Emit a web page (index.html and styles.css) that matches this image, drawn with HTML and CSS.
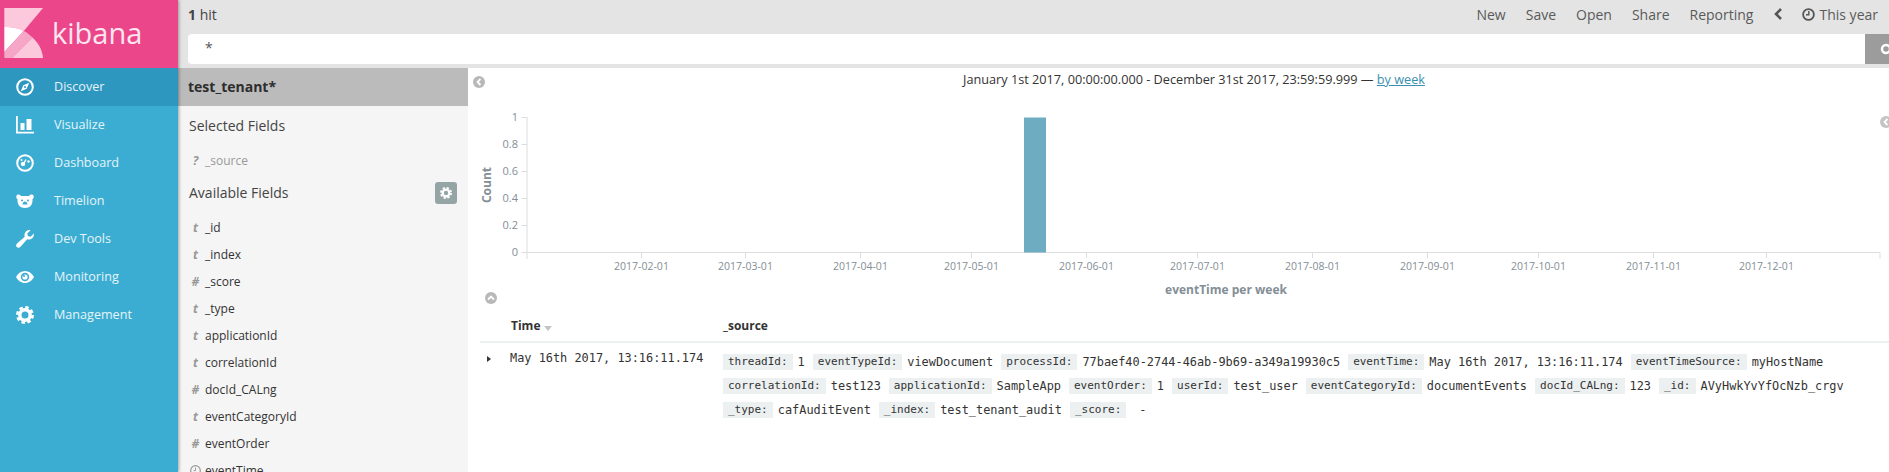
FILE: index.html
```html
<!DOCTYPE html>
<html>
<head>
	<meta charset="UTF-8">
	<title>Discover - Kibana</title>
	<link rel="stylesheet" href="styles.css">
</head>
<body>
	<nav class="sidebar">
		<div class="brand">
			<svg class="logo" width="48" height="68" viewBox="0 0 48 68">
				<path fill="#fbc8dc" d="M4.3 8H43L23.8 31C18 28 11 26.6 4.3 27z"/>
				<path fill="#fff" d="M4.3 27C11 26.6 18 28 23.8 31L4.3 52z"/>
				<path fill="#f6a6c6" d="M4.3 52L23.8 31C27 32.600 30 35 32.500 37.500L12 58H4.300z"/>
				<path fill="#fbc8dc" d="M12 58L32.500 37.500C38.500 43 42.300 50 43 58z"/>
			</svg>
			<span class="brand-name">kibana</span>
		</div>
		<a class="nav-item active">
			<svg class="nav-icon" viewBox="0 0 18 18"><circle cx="9" cy="9" r="7.800" fill="none" stroke="#fff" stroke-width="2"/><path fill="#fff" d="M13.200 4.800L10.700 10.700 4.800 13.200 7.300 7.300zM9 8a1 1 0 1 0 0 2 1 1 0 0 0 0-2z" fill-rule="evenodd"/></svg>
			<span>Discover</span>
		</a>
		<a class="nav-item">
			<svg class="nav-icon" viewBox="0 0 18 18"><path fill="#fff" d="M0 0h1.800v15.700H18V17.500H0zM4.500 7h4v7h-4zM10.500 3h5v11h-5z"/></svg>
			<span>Visualize</span>
		</a>
		<a class="nav-item">
			<svg class="nav-icon" viewBox="0 0 18 18"><circle cx="9" cy="9" r="7.800" fill="none" stroke="#fff" stroke-width="2"/><circle cx="7" cy="10" r="2.200" fill="#fff"/><path stroke="#fff" stroke-width="1.500" d="M8 9l2-3.500"/><circle cx="12.500" cy="7.500" r="1.200" fill="#fff"/><circle cx="5.500" cy="6" r="1" fill="#fff"/></svg>
			<span>Dashboard</span>
		</a>
		<a class="nav-item">
			<svg class="nav-icon" viewBox="0 0 18 18"><path fill="#fff" fill-rule="evenodd" d="M1 3C3 1.800 4.500 3 5 4H13C13.500 3 15 1.800 17 3 18.500 4.500 17.500 6.500 16.500 7 16.800 11 15.500 16 9 16 2.500 16 1.200 11 1.500 7 .5 6.500-.5 4.500 1 3zM6 7.500a1 1 0 1 0 0 2 1 1 0 0 0 0-2zM12 7.500a1 1 0 1 0 0 2 1 1 0 0 0 0-2zM9 9.500c-1.500 0-2.500 1.500-2.500 3H11.500C11.500 11 10.500 9.500 9 9.500z"/></svg>
			<span>Timelion</span>
		</a>
		<a class="nav-item">
			<svg class="nav-icon" viewBox="0 0 18 18"><path fill="#fff" d="M17.800 3.500C18.300 6 17 8.500 14.500 9.300 13.300 9.700 12.200 9.600 11.200 9.200L4.500 16.800C3.500 18 1.800 18.100.8 17.100-.2 16.100-.1 14.500 1 13.500L8.800 6.800C8.400 5.800 8.300 4.700 8.700 3.500 9.500 1 12 -.3 14.500.2L11.300 3.400 11.900 6.100 14.600 6.700z"/></svg>
			<span>Dev Tools</span>
		</a>
		<a class="nav-item">
			<svg class="nav-icon" viewBox="0 0 18 18"><path fill="#fff" fill-rule="evenodd" d="M0 9C2 5.300 5.300 3 9 3s7 2.300 9 6c-2 3.700-5.300 6-9 6S2 12.700 0 9zM9 4.800a4.200 4.200 0 1 0 0 8.400 4.200 4.200 0 0 0 0-8.400z"/><circle cx="9" cy="9" r="2.600" fill="#fff"/><circle cx="8" cy="8" r="1" fill="#3cadd2"/></svg>
			<span>Monitoring</span>
		</a>
		<a class="nav-item">
			<svg class="nav-icon" viewBox="0 0 18 18"><circle cx="9" cy="9" r="5.200" fill="none" stroke="#fff" stroke-width="3.400"/><circle cx="9" cy="9" r="7.700" fill="none" stroke="#fff" stroke-width="2.600" stroke-dasharray="3.500 2.550"/></svg>
			<span>Management</span>
		</a>
	</nav>

	<div class="page">
		<header class="topbar">
			<div class="topbar-row">
				<div class="hits"><b>1</b> hit</div>
				<div class="actions">
					<a>New</a>
					<a>Save</a>
					<a>Open</a>
					<a>Share</a>
					<a>Reporting</a>
					<svg class="chevron" width="8" height="12" viewBox="0 0 8 12"><path fill="none" stroke="#555" stroke-width="2.600" d="M7 1L2 6l5 5"/></svg>
					<span class="timepicker">
						<svg width="13" height="13" viewBox="0 0 13 13"><circle cx="6.500" cy="6.500" r="5.400" fill="none" stroke="#555" stroke-width="1.800"/><path fill="none" stroke="#555" stroke-width="1.400" d="M6.800 3v3.800H4"/></svg>
						This year
					</span>
				</div>
			</div>
			<div class="searchbar">
				<div class="query">*</div>
				<div class="search-btn"><svg width="24" height="30" viewBox="0 0 24 30"><circle cx="21" cy="15" r="4" fill="none" stroke="#fff" stroke-width="2.500"/></svg></div>
			</div>
		</header>

		<div class="content">
			<aside class="fields">
				<div class="index-name">test_tenant*</div>
				<div class="field-heading heading-selected">Selected Fields</div>
				<div class="field muted"><i class="type">?</i>_source</div>
				<div class="field-heading heading-available">
					Available Fields
					<span class="gear-btn"><svg width="12" height="12" viewBox="0 0 18 18"><circle cx="9" cy="9" r="5" fill="none" stroke="#fff" stroke-width="3.400"/><circle cx="9" cy="9" r="7.700" fill="none" stroke="#fff" stroke-width="2.600" stroke-dasharray="3.500 2.550"/></svg></span>
				</div>
				<div class="field field-first"><i class="type">t</i>_id</div>
				<div class="field"><i class="type">t</i>_index</div>
				<div class="field"><i class="type">#</i>_score</div>
				<div class="field"><i class="type">t</i>_type</div>
				<div class="field"><i class="type">t</i>applicationId</div>
				<div class="field"><i class="type">t</i>correlationId</div>
				<div class="field"><i class="type">#</i>docId_CALng</div>
				<div class="field"><i class="type">t</i>eventCategoryId</div>
				<div class="field"><i class="type">#</i>eventOrder</div>
				<div class="field"><i class="type type-clock"><svg width="11" height="11" viewBox="0 0 11 11"><circle cx="5.500" cy="5.500" r="4.800" fill="none" stroke="#999" stroke-width="1.200"/><path fill="none" stroke="#999" d="M5.500 2.500v3.200h-2"/></svg></i>eventTime</div>
			</aside>

			<main class="results">
				<span class="collapse collapse-fields"><svg width="12" height="12" viewBox="0 0 12 12"><path fill="none" stroke="#fff" stroke-width="1.800" d="M7.500 3L4.500 6l3 3"/></svg></span>
				<span class="collapse collapse-right"><svg width="12" height="12" viewBox="0 0 12 12"><path fill="none" stroke="#fff" stroke-width="1.800" d="M7.500 3L4.500 6l3 3"/></svg></span>
				<span class="collapse collapse-chart"><svg width="12" height="12" viewBox="0 0 12 12"><path fill="none" stroke="#fff" stroke-width="1.800" d="M3 7.500L6 4.500l3 3"/></svg></span>

				<div class="range">January 1st 2017, 00:00:00.000 - December 31st 2017, 23:59:59.999 — <a>by week</a></div>

				<!-- coordinates are page pixels, the viewBox starts where the chart starts -->
				<svg class="chart" width="1421" height="218" viewBox="468 92 1421 218">
					<g class="axis-line">
						<path d="M527 117V259M527 252.500H1880M1880 252.500V259"/>
						<path d="M521.500 117.500H527M521.500 144.500H527M521.500 171.500H527M521.500 198.500H527M521.500 225.500H527M521.500 252.500H527"/>
						<path d="M641.500 252V258M745.500 252V258M860.500 252V258M971.500 252V258M1086.500 252V258M1197.500 252V258M1312.500 252V258M1427.500 252V258M1538.500 252V258M1653.500 252V258M1766.500 252V258"/>
					</g>
					<rect class="bar" x="1024" y="117.500" width="22" height="135"/>
					<g class="tick-y">
						<text x="518" y="121">1</text>
						<text x="518" y="148">0.8</text>
						<text x="518" y="175">0.6</text>
						<text x="518" y="202">0.4</text>
						<text x="518" y="229">0.2</text>
						<text x="518" y="256">0</text>
					</g>
					<g class="tick-x">
						<text x="641.500" y="270">2017-02-01</text>
						<text x="745.500" y="270">2017-03-01</text>
						<text x="860.500" y="270">2017-04-01</text>
						<text x="971.500" y="270">2017-05-01</text>
						<text x="1086.500" y="270">2017-06-01</text>
						<text x="1197.500" y="270">2017-07-01</text>
						<text x="1312.500" y="270">2017-08-01</text>
						<text x="1427.500" y="270">2017-09-01</text>
						<text x="1538.500" y="270">2017-10-01</text>
						<text x="1653.500" y="270">2017-11-01</text>
						<text x="1766.500" y="270">2017-12-01</text>
					</g>
					<text class="axis-title" transform="translate(491 185) rotate(-90)">Count</text>
					<text class="axis-title" x="1226" y="294">eventTime per week</text>
				</svg>

				<div class="doc-head">
					<div class="col-time">Time <span class="sort"></span></div>
					<div>_source</div>
				</div>
				<div class="doc-row">
					<div class="col-caret"><span class="caret"></span></div>
					<div class="doc-time">May 16th 2017, 13:16:11.174</div>
					<div class="source">
						<div class="pair"><span class="tag">threadId:</span><span>1</span></div>
						<div class="pair"><span class="tag">eventTypeId:</span><span>viewDocument</span></div>
						<div class="pair"><span class="tag">processId:</span><span>77baef40-2744-46ab-9b69-a349a19930c5</span></div>
						<div class="pair"><span class="tag">eventTime:</span><span>May 16th 2017, 13:16:11.174</span></div>
						<div class="pair"><span class="tag">eventTimeSource:</span><span>myHostName</span></div>
						<div class="pair"><span class="tag">correlationId:</span><span>test123</span></div>
						<div class="pair"><span class="tag">applicationId:</span><span>SampleApp</span></div>
						<div class="pair"><span class="tag">eventOrder:</span><span>1</span></div>
						<div class="pair"><span class="tag">userId:</span><span>test_user</span></div>
						<div class="pair"><span class="tag">eventCategoryId:</span><span>documentEvents</span></div>
						<div class="pair"><span class="tag">docId_CALng:</span><span>123</span></div>
						<div class="pair"><span class="tag">_id:</span><span>AVyHwkYvYfOcNzb_crgv</span></div>
						<div class="pair"><span class="tag">_type:</span><span>cafAuditEvent</span></div>
						<div class="pair"><span class="tag">_index:</span><span>test_tenant_audit</span></div>
						<div class="pair"><span class="tag">_score:</span><span class="dash">-</span></div>
					</div>
				</div>
			</main>
		</div>
	</div>
</body>
</html>
```

FILE: styles.css
```css
body {
	margin: 0;
	height: 472px;
	overflow: hidden;
	display: flex;
	background-color: #fff;
	color: #444;
	font-family: "Open Sans", sans-serif;
	font-size: 14px;
}

/* sidebar */
.sidebar {
	flex: 0 0 178px;
	background-color: #3cadd2;
	box-shadow: 1px 0 3px rgba(0, 0, 0, 0.35);
	position: relative;
	z-index: 2;
}

.brand {
	height: 68px;
	display: flex;
	align-items: center;
	background-color: #ec468b;
}

.logo {
	flex: 0 0 48px;
}

.brand-name {
	margin-left: 4px;
	padding-bottom: 2px;
	color: #fde6f0;
	font-size: 29px;
	line-height: 34px;
}

.nav-item {
	height: 38px;
	display: flex;
	align-items: center;
	padding-left: 16px;
	color: #e4f4f9;
	font-size: 12.6px;
}

.nav-item span {
	padding-bottom: 2px;
}

.nav-item.active {
	background-color: #2e97c0;
}

.nav-icon {
	width: 18px;
	height: 18px;
	margin-right: 20px;
}

/* top bar */
.page {
	flex: 1;
	min-width: 0;
	display: flex;
	flex-direction: column;
}

.topbar {
	height: 68px;
	background-color: #e4e4e4;
}

.topbar-row {
	height: 34px;
	padding-bottom: 6px;
	box-sizing: border-box;
	display: flex;
	align-items: center;
	justify-content: space-between;
	padding-left: 10px;
	padding-right: 11px;
}

.actions {
	display: flex;
	align-items: center;
	gap: 20px;
	color: #5a5a5a;
}

.chevron {
	margin-left: 1px;
}

.timepicker {
	display: flex;
	align-items: center;
	gap: 4px;
}

.searchbar {
	height: 30px;
	margin-left: 10px;
	display: flex;
}

.query {
	flex: 1;
	background-color: #fff;
	border-radius: 4px 0 0 4px;
	padding-left: 17px;
	line-height: 28px;
	color: #555;
}

.search-btn {
	flex: 0 0 24px;
	height: 30px;
	background-color: #9c9c9c;
}

/* fields list */
.content {
	flex: 1;
	min-height: 0;
	display: flex;
}

.fields {
	flex: 0 0 290px;
	overflow: hidden;
	background-color: #f5f5f5;
}

.index-name {
	height: 38px;
	line-height: 37px;
	padding-left: 10px;
	background-color: #bbb;
	color: #2d2d2d;
	font-size: 14px;
	font-weight: 700;
}

.field-heading {
	height: 28px;
	line-height: 28px;
	padding-left: 11px;
	font-size: 14px;
	color: #444;
}

.heading-selected {
	margin-top: 6px;
}

.heading-available {
	margin-top: 5px;
	display: flex;
	align-items: center;
	justify-content: space-between;
	padding-right: 11px;
}

.gear-btn {
	width: 22px;
	height: 22px;
	display: flex;
	align-items: center;
	justify-content: center;
	background-color: #95a5a6;
	border-radius: 3px;
}

.field {
	height: 27px;
	line-height: 27px;
	display: flex;
	padding-left: 10px;
	font-size: 12px;
	color: #333;
	white-space: nowrap;
}

.field.muted {
	margin-top: 7px;
	color: #999;
}

.field-first {
	margin-top: 7px;
}

.type {
	flex: 0 0 17px;
	padding-left: 1px;
	padding-right: 3px;
	box-sizing: border-box;
	color: #999;
	font-weight: 700;
	text-align: center;
}

.type-clock svg {
	vertical-align: -1px;
}

/* results */
.results {
	flex: 1;
	min-width: 0;
	position: relative;
}

.collapse {
	position: absolute;
	width: 12px;
	height: 12px;
	border-radius: 50%;
	background-color: #b8b8b8;
}

.collapse svg {
	display: block;
}

.collapse-fields {
	left: 5px;
	top: 8px;
}

.collapse-right {
	left: 1412px;
	top: 48px;
	background-color: #c4c4c4;
}

.collapse-chart {
	left: 17px;
	top: 224px;
}

.range {
	height: 24px;
	line-height: 23px;
	padding-left: 31px;
	text-align: center;
	font-size: 12.7px;
	color: #333;
}

.range a {
	color: #3b8fb0;
	text-decoration: underline;
}

.chart {
	display: block;
}

.axis-line path {
	fill: none;
	stroke: #ddd;
	stroke-width: 1;
}

.bar {
	fill: #6eadc1;
}

.tick-y text, .tick-x text {
	font-size: 10.5px;
	fill: #848e96;
}

.tick-y text {
	font-size: 11px;
	text-anchor: end;
}

.tick-x text {
	text-anchor: middle;
}

.axis-title {
	font-size: 12px;
	font-weight: 700;
	fill: #848e96;
	text-anchor: middle;
}

.doc-head {
	height: 31px;
	margin-left: 12px;
	padding-left: 31px;
	display: flex;
	align-items: center;
	border-bottom: 2px solid #ecf0f1;
	font-size: 12px;
	font-weight: 700;
	color: #333;
}

.col-time {
	flex: 0 0 212px;
}

.sort {
	display: inline-block;
	border-left: 4px solid transparent;
	border-right: 4px solid transparent;
	border-top: 5px solid #c4c4c4;
	vertical-align: -1px;
}

.doc-row {
	margin-left: 12px;
	display: flex;
	padding-top: 7px;
	font-family: "DejaVu Sans Mono", monospace;
	font-size: 11.9px;
	color: #333;
}

.col-caret {
	flex: 0 0 30px;
	padding-left: 7px;
	box-sizing: border-box;
	line-height: 16px;
}

.caret {
	display: inline-block;
	border-top: 3.5px solid transparent;
	border-bottom: 3.5px solid transparent;
	border-left: 4px solid #333;
}

.doc-time {
	flex: 0 0 213px;
	line-height: 16px;
}

.source {
	flex: 1;
	min-width: 0;
	padding-right: 20px;
	display: flex;
	flex-wrap: wrap;
	column-gap: 8px;
}

.pair {
	height: 24px;
	display: flex;
	align-items: center;
	gap: 5px;
	white-space: nowrap;
}

.tag {
	background-color: #ecf0f1;
	padding: 0 5px;
	line-height: 16px;
	font-size: 11px;
}

.dash {
	margin-left: 8px;
}
```
